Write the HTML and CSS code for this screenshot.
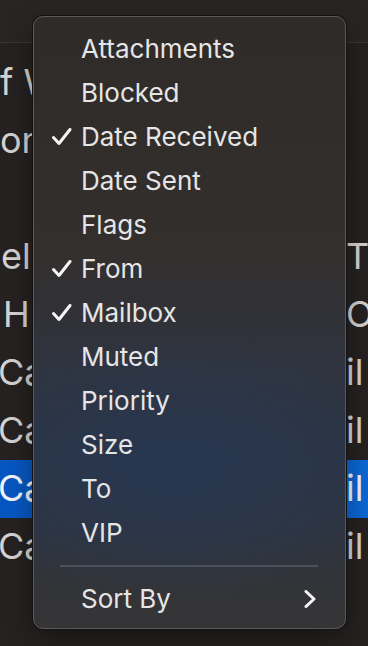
FILE: index.html
```html
<!DOCTYPE html>
<html lang="en">
<head>
    <meta charset="UTF-8">
    <meta name="viewport" content="width=device-width, initial-scale=1.0">
    <title>Mail - View menu</title>
    <link rel="stylesheet" href="styles.css">
</head>
<body>
    <div class="window">
        <div class="toolbar"></div>

        <div class="message-list">
            <div class="row"><span class="left">f W</span><span class="right"></span></div>
            <div class="row"><span class="left">on</span><span class="right"></span></div>
            <div class="row"><span class="left"></span><span class="right"></span></div>
            <div class="row"><span class="left indent">el</span><span class="right">T</span></div>
            <div class="row"><span class="left indent-more">H</span><span class="right">O</span></div>
            <div class="row"><span class="left cut">Ca</span><span class="right">il</span></div>
            <div class="row"><span class="left cut">Ca</span><span class="right">il</span></div>
            <div class="row selected"><span class="left cut">Ca</span><span class="right">il</span></div>
            <div class="row"><span class="left cut">Ca</span><span class="right">il</span></div>
            <div class="row"><span class="left"></span><span class="right"></span></div>
        </div>

        <div class="context-menu">
            <div class="menu-item"><span class="check"></span><span class="label">Attachments</span></div>
            <div class="menu-item"><span class="check"></span><span class="label">Blocked</span></div>
            <div class="menu-item">
                <span class="check">
                    <svg width="20" height="18" viewBox="0 0 20 18"><path d="M1.5 9.5 L7 15.5 L18 1.5" /></svg>
                </span>
                <span class="label">Date Received</span>
            </div>
            <div class="menu-item"><span class="check"></span><span class="label">Date Sent</span></div>
            <div class="menu-item"><span class="check"></span><span class="label">Flags</span></div>
            <div class="menu-item">
                <span class="check">
                    <svg width="20" height="18" viewBox="0 0 20 18"><path d="M1.5 9.5 L7 15.5 L18 1.5" /></svg>
                </span>
                <span class="label">From</span>
            </div>
            <div class="menu-item">
                <span class="check">
                    <svg width="20" height="18" viewBox="0 0 20 18"><path d="M1.5 9.5 L7 15.5 L18 1.5" /></svg>
                </span>
                <span class="label">Mailbox</span>
            </div>
            <div class="menu-item"><span class="check"></span><span class="label">Muted</span></div>
            <div class="menu-item"><span class="check"></span><span class="label">Priority</span></div>
            <div class="menu-item"><span class="check"></span><span class="label">Size</span></div>
            <div class="menu-item"><span class="check"></span><span class="label">To</span></div>
            <div class="menu-item"><span class="check"></span><span class="label">VIP</span></div>

            <div class="separator"></div>

            <div class="menu-item submenu">
                <span class="check"></span>
                <span class="label">Sort By</span>
                <svg class="chevron" width="12" height="18" viewBox="0 0 12 18"><path d="M2 1.5 L10 9 L2 16.5" /></svg>
            </div>
        </div>
    </div>
</body>
</html>
```

FILE: styles.css
```css
body {
    margin: 0;
    padding: 0;
    background-color: #252221;
    font-family: 'Inter', 'Noto Sans', sans-serif;
    font-size: 26px;
    overflow: hidden;
}

.window {
    position: relative;
    width: 368px;
    height: 646px;
    overflow: hidden;
}

.toolbar {
    height: 42px;
    background-color: #282524;
    border-bottom: 1px solid #3a3736;
}

.message-list {
    padding-top: 11px;
}

/* rows behind the menu: only their edges show */
.row {
    display: grid;
    grid-template-columns: 346px 1fr;
    height: 58px;
    padding-top: 6px;
    box-sizing: border-box;
    font-size: 36px;
    line-height: 44px;
    color: #d6d4d3;
    white-space: nowrap;
}

.row .left,
.row .right {
    overflow: hidden;
}

.row .cut {
    margin-left: -2px;
}

.row .indent {
    padding-left: 1px;
}

.row .indent-more {
    padding-left: 3px;
}

.row.selected {
    background: linear-gradient(to right, #0757c2, #0b68d6);
    color: #f4f6fa;
}

.context-menu {
    position: absolute;
    left: 33px;
    top: 16px;
    width: 313px;
    height: 613px;
    box-sizing: border-box;
    padding: 10px 0 7px;
    border: 1px solid #5b5857;
    border-radius: 10px;
    box-shadow: 0 0 0 1px #141212, 0 10px 30px rgba(0, 0, 0, 0.4);
    background:
        radial-gradient(ellipse 70% 22% at 45% 74%, rgba(36, 58, 92, 0.55), rgba(36, 58, 92, 0) 100%),
        linear-gradient(to bottom, #2f2b29 0%, #332f2d 38%, #2f3440 58%, #2b3444 72%, #2e3440 84%, #333437 94%, #353537 100%);
    color: #e6e5e5;
}

.menu-item {
    display: flex;
    align-items: center;
    height: 44px;
    padding: 0 29px 0 18px;
    line-height: 44px;
}

.check {
    width: 29px;
    height: 44px;
    display: flex;
    align-items: center;
    flex-shrink: 0;
}

.check svg path,
.chevron path {
    fill: none;
    stroke: #f5f5f5;
    stroke-width: 3;
    stroke-linecap: round;
    stroke-linejoin: round;
}

.label {
    flex: 1;
}

.separator {
    height: 2px;
    margin: 10px 27px 10px 26px;
    background-color: #4c525c;
}
```
